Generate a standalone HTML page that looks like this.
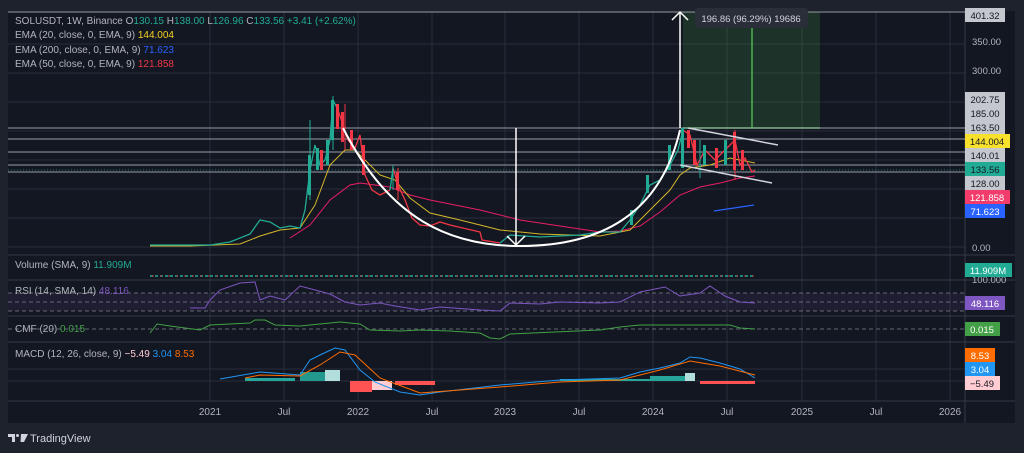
<!DOCTYPE html>
<html><head><meta charset="utf-8"><style>
html,body{margin:0;padding:0;background:#1e222d;width:1024px;height:453px;overflow:hidden}
svg{display:block}
text{font-family:"Liberation Sans",sans-serif}
</style></head><body>
<svg width="1024" height="453" viewBox="0 0 1024 453" xmlns="http://www.w3.org/2000/svg">
<rect x="0" y="0" width="1024" height="453" fill="#1e222d"/>
<rect x="8" y="11" width="1007" height="412" fill="#131722"/>
<g stroke="#2a2e39" stroke-width="1">
<line x1="210" y1="11" x2="210" y2="401"/><line x1="284" y1="11" x2="284" y2="401"/><line x1="358" y1="11" x2="358" y2="401"/><line x1="432" y1="11" x2="432" y2="401"/><line x1="505" y1="11" x2="505" y2="401"/><line x1="579" y1="11" x2="579" y2="401"/><line x1="653" y1="11" x2="653" y2="401"/><line x1="727" y1="11" x2="727" y2="401"/><line x1="802" y1="11" x2="802" y2="401"/><line x1="876" y1="11" x2="876" y2="401"/><line x1="950" y1="11" x2="950" y2="401"/>
<line x1="8" y1="44" x2="965" y2="44"/><line x1="8" y1="73" x2="965" y2="73"/><line x1="8" y1="102" x2="965" y2="102"/><line x1="8" y1="131" x2="965" y2="131"/><line x1="8" y1="160" x2="965" y2="160"/><line x1="8" y1="189" x2="965" y2="189"/><line x1="8" y1="218" x2="965" y2="218"/><line x1="8" y1="247" x2="965" y2="247"/>
<line x1="8" y1="369" x2="965" y2="369"/><line x1="8" y1="381" x2="965" y2="381"/>
</g>
<g stroke="#363a45" stroke-width="1">
<line x1="8" y1="255" x2="1015" y2="255"/><line x1="8" y1="280" x2="1015" y2="280"/><line x1="8" y1="316" x2="1015" y2="316"/><line x1="8" y1="342" x2="1015" y2="342"/><line x1="8" y1="401" x2="1015" y2="401"/>
<line x1="965" y1="11" x2="965" y2="423"/>
</g>
<rect x="683" y="12" width="137" height="116" fill="#4caf50" fill-opacity="0.18"/>
<line x1="683" y1="128" x2="820" y2="128" stroke="#4caf50" stroke-width="1.5"/>
<line x1="752" y1="28" x2="752" y2="128" stroke="#4caf50" stroke-width="1.5"/>
<g stroke="#b2b5be" stroke-width="1" opacity="0.85">
<line x1="8" y1="12" x2="965" y2="12"/><line x1="8" y1="128" x2="965" y2="128"/><line x1="8" y1="139" x2="965" y2="139"/><line x1="8" y1="152" x2="965" y2="152"/><line x1="8" y1="165" x2="965" y2="165"/><line x1="8" y1="172" x2="965" y2="172"/>
</g>
<line x1="8" y1="170" x2="965" y2="170" stroke="#22ab94" stroke-dasharray="1,2" opacity="0.6"/>
<polyline fill="none" stroke="#e91e63" stroke-width="1" points="290,238 310,225 330,200 350,185 360,183 390,187 410,195 430,200 480,210 520,220 560,226 600,232 620,231 640,226 660,212 680,195 700,187 720,183 740,178 755,176"/>
<polyline fill="none" stroke="#d4b72a" stroke-width="1" points="150,246 190,246 240,244 260,236 280,230 300,228 315,205 330,165 345,150 355,150 370,165 380,175 395,180 410,198 430,213 460,220 500,230 540,234 600,236 630,230 650,210 670,190 680,175 690,168 710,165 730,158 755,163"/>
<line x1="714" y1="211" x2="754" y2="205" stroke="#2962ff" stroke-width="1.2"/>
<!-- price -->
<g fill="none" stroke-width="1.3">
<polyline stroke="#22ab94" points="150,245 210,245 230,242 250,234 260,220 270,222 280,228 290,226 300,228 305,210 310,170 315,145 320,165 325,160 330,140 333,100 338,110"/>
<polyline stroke="#f23645" points="338,110 343,125 348,140 355,148 360,135 365,175 372,190 380,195 390,190"/>
<polyline stroke="#22ab94" points="390,190 393,168"/>
<polyline stroke="#f23645" points="393,168 398,185 405,200 412,218 420,225 430,226 440,222 450,225 480,232 482,240 500,243"/>
<polyline stroke="#22ab94" points="500,243 510,235 540,237 580,235 600,232 620,232 630,220 640,205 650,185 660,180 670,165 678,150 683,130"/>
<polyline stroke="#f23645" points="683,130 690,135 697,165 705,150 715,160 725,150 735,140 740,165 745,158 752,172 755,170"/>
</g>
<g stroke-width="1">
<line x1="333" y1="96" x2="333" y2="150" stroke="#22ab94"/><line x1="310" y1="120" x2="310" y2="200" stroke="#22ab94"/><line x1="735" y1="130" x2="735" y2="180" stroke="#f23645"/><line x1="700" y1="140" x2="700" y2="178" stroke="#22ab94"/>
<line x1="345" y1="104" x2="345" y2="150" stroke="#f23645"/><line x1="393" y1="165" x2="393" y2="190" stroke="#22ab94"/><line x1="398" y1="168" x2="398" y2="200" stroke="#f23645"/>
</g>
<g fill="#22ab94"><rect x="308" y="155" width="3" height="40"/><rect x="316" y="148" width="3" height="22"/><rect x="326" y="140" width="3" height="25"/><rect x="331" y="100" width="3" height="40"/><rect x="668" y="145" width="3" height="25"/><rect x="681" y="128" width="3" height="40"/><rect x="703" y="145" width="3" height="20"/><rect x="724" y="140" width="3" height="25"/><rect x="646" y="175" width="3" height="18"/><rect x="630" y="210" width="3" height="15"/></g>
<g fill="#f23645"><rect x="320" y="150" width="3" height="20"/><rect x="336" y="104" width="3" height="25"/><rect x="341" y="112" width="3" height="30"/><rect x="350" y="130" width="3" height="20"/><rect x="362" y="145" width="3" height="30"/><rect x="396" y="172" width="3" height="18"/><rect x="687" y="130" width="3" height="18"/><rect x="693" y="140" width="3" height="25"/><rect x="715" y="148" width="3" height="20"/><rect x="733" y="132" width="3" height="38"/><rect x="741" y="150" width="3" height="20"/></g>
<path d="M343 128 C 390 220, 450 246, 520 246 C 600 246, 660 215, 680 130" fill="none" stroke="#ffffff" stroke-width="2"/>
<line x1="516" y1="128" x2="516" y2="245" stroke="#fff" stroke-width="1.5"/>
<polyline points="507,236 516,245 525,236" fill="none" stroke="#fff" stroke-width="1.5"/>
<line x1="680" y1="128" x2="680" y2="12" stroke="#fff" stroke-width="1.5"/>
<polyline points="672,20 680,12 688,20" fill="none" stroke="#fff" stroke-width="1.5"/>
<line x1="688" y1="128" x2="778" y2="145" stroke="#d1d4dc" stroke-width="1.5"/>
<line x1="680" y1="165" x2="772" y2="183" stroke="#d1d4dc" stroke-width="1.5"/>
<rect x="695" y="8" width="113" height="20" rx="3" fill="#2a2e39"/>
<text x="751" y="22" font-size="9.5" fill="#d1d4dc" text-anchor="middle">196.86 (96.29%) 19686</text>
<line x1="150" y1="276" x2="755" y2="276" stroke="#22ab94" stroke-width="1.5" stroke-dasharray="3,2"/>
<line x1="152" y1="276" x2="755" y2="276" stroke="#f23645" stroke-width="1" stroke-dasharray="2,6" opacity="0.8"/>
<rect x="8" y="293" width="957" height="18" fill="#7e57c2" fill-opacity="0.1"/>
<g stroke="#787b86" stroke-dasharray="4,3" opacity="0.8"><line x1="8" y1="293" x2="965" y2="293"/><line x1="8" y1="302" x2="965" y2="302"/><line x1="8" y1="311" x2="965" y2="311"/><line x1="8" y1="329" x2="965" y2="329"/></g>
<polyline fill="none" stroke="#7e57c2" stroke-width="1" points="190,308 205,308 210,300 220,290 240,283 255,282 260,300 270,296 285,300 300,286 315,290 330,294 345,302 360,305 380,303 395,306 420,310 440,307 480,310 500,311 510,303 540,304 560,302 600,303 620,302 640,292 650,290 665,287 680,296 700,293 710,286 725,296 740,302 755,303"/>
<polyline fill="none" stroke="#43a047" stroke-width="1" points="150,333 157,324 170,326 200,330 210,325 250,323 255,320 265,320 275,325 300,326 340,322 360,324 370,330 400,331 420,330 450,331 480,333 490,338 500,339 510,334 600,330 620,327 640,325 680,325 700,325 730,325 740,328 755,329"/>
<g fill="#26a69a"><rect x="300" y="372" width="40" height="9" opacity="0.9"/><rect x="245" y="378" width="50" height="3"/><rect x="560" y="379" width="90" height="2"/><rect x="650" y="376" width="35" height="5"/></g>
<g fill="#b2dfdb"><rect x="325" y="370" width="15" height="11"/><rect x="685" y="373" width="10" height="8"/></g>
<g fill="#ff5252"><rect x="350" y="381" width="22" height="11"/><rect x="395" y="381" width="40" height="4"/><rect x="700" y="381" width="55" height="3"/></g>
<g fill="#ffcdd2"><rect x="372" y="381" width="20" height="9"/></g>
<polyline fill="none" stroke="#2196f3" stroke-width="1" points="220,379 260,372 300,375 310,360 320,355 335,348 345,350 360,370 375,382 400,392 420,395 440,392 500,385 560,380 620,378 640,372 660,368 680,363 690,357 700,358 720,363 740,369 755,378"/>
<polyline fill="none" stroke="#ff6d00" stroke-width="1" points="245,378 260,375 300,376 320,365 340,352 355,355 380,378 420,393 500,387 560,382 620,380 660,370 690,361 720,366 755,375"/>
<g font-size="10" fill="#b2b5be">
<text x="15" y="24">SOLUSDT, 1W, Binance  O<tspan fill="#22ab94">130.15</tspan>  H<tspan fill="#22ab94">138.00</tspan>  L<tspan fill="#22ab94">126.96</tspan>  C<tspan fill="#22ab94">133.56</tspan>  <tspan fill="#22ab94">+3.41 (+2.62%)</tspan></text>
<text x="15" y="38">EMA (20, close, 0, EMA, 9) <tspan fill="#f7d423">144.004</tspan></text>
<text x="15" y="53">EMA (200, close, 0, EMA, 9) <tspan fill="#2962ff">71.623</tspan></text>
<text x="15" y="67">EMA (50, close, 0, EMA, 9) <tspan fill="#f23645">121.858</tspan></text>
<text x="15" y="268">Volume (SMA, 9) <tspan fill="#22ab94">11.909M</tspan></text>
<text x="15" y="294">RSI (14, SMA, 14) <tspan fill="#7e57c2">48.116</tspan></text>
<text x="15" y="332">CMF (20) <tspan fill="#43a047">0.015</tspan></text>
<text x="15" y="357">MACD (12, 26, close, 9) <tspan fill="#ffcdd2">−5.49</tspan> <tspan fill="#2196f3">3.04</tspan> <tspan fill="#ff6d00">8.53</tspan></text>
</g>
<g font-size="10" fill="#b2b5be" text-anchor="middle">
<text x="210" y="415">2021</text><text x="284" y="415">Jul</text><text x="358" y="415">2022</text><text x="432" y="415">Jul</text><text x="505" y="415">2023</text><text x="579" y="415">Jul</text><text x="653" y="415">2024</text><text x="727" y="415">Jul</text><text x="802" y="415">2025</text><text x="876" y="415">Jul</text><text x="950" y="415">2026</text>
</g>
<g font-size="9.5" fill="#b2b5be">
<text x="972" y="45">350.00</text><text x="972" y="74">300.00</text><text x="972" y="251">0.00</text><text x="972" y="283">100.000</text>
</g>
<g font-size="9.5">
<rect x="965" y="8" width="40" height="14" fill="#c5c7ce"/><text x="985" y="19" fill="#131722" text-anchor="middle">401.32</text>
<rect x="965" y="92" width="40" height="42" fill="#c5c7ce"/>
<text x="985" y="103" fill="#131722" text-anchor="middle">202.75</text><text x="985" y="117" fill="#131722" text-anchor="middle">185.00</text><text x="985" y="131" fill="#131722" text-anchor="middle">163.50</text>
<rect x="965" y="134" width="45" height="14" fill="#f7e12d"/><text x="987" y="145" fill="#131722" text-anchor="middle">144.004</text>
<rect x="965" y="148" width="40" height="14" fill="#c5c7ce"/><text x="985" y="159" fill="#131722" text-anchor="middle">140.01</text>
<rect x="965" y="162" width="40" height="14" fill="#22ab94"/><text x="985" y="173" fill="#131722" text-anchor="middle">133.56</text>
<rect x="965" y="176" width="40" height="14" fill="#c5c7ce"/><text x="985" y="187" fill="#131722" text-anchor="middle">128.00</text>
<rect x="965" y="190" width="45" height="14" fill="#f23c6c"/><text x="987" y="201" fill="#fff" text-anchor="middle">121.858</text>
<rect x="965" y="204" width="40" height="14" fill="#2962ff"/><text x="985" y="215" fill="#fff" text-anchor="middle">71.623</text>
<rect x="965" y="263" width="47" height="14" fill="#22ab94"/><text x="988" y="274" fill="#fff" text-anchor="middle">11.909M</text>
<rect x="965" y="296" width="40" height="14" fill="#7e57c2"/><text x="985" y="307" fill="#fff" text-anchor="middle">48.116</text>
<rect x="965" y="322" width="35" height="14" fill="#43a047"/><text x="982" y="333" fill="#fff" text-anchor="middle">0.015</text>
<rect x="965" y="348" width="30" height="14" fill="#ff6d00"/><text x="980" y="359" fill="#fff" text-anchor="middle">8.53</text>
<rect x="965" y="362" width="30" height="14" fill="#2196f3"/><text x="980" y="373" fill="#fff" text-anchor="middle">3.04</text>
<rect x="965" y="376" width="35" height="14" fill="#ffcdd2"/><text x="982" y="387" fill="#131722" text-anchor="middle">−5.49</text>
</g>
<g fill="#d1d4dc"><path d="M8 434 H15 V442 H12 V437 H8 Z"/><circle cx="17.5" cy="435.5" r="1.5"/><path d="M21 434 H28 L24 442 H20.5 Z"/></g>
<text x="30" y="442" font-size="11" fill="#d1d4dc">TradingView</text>
</svg>
</body></html>
